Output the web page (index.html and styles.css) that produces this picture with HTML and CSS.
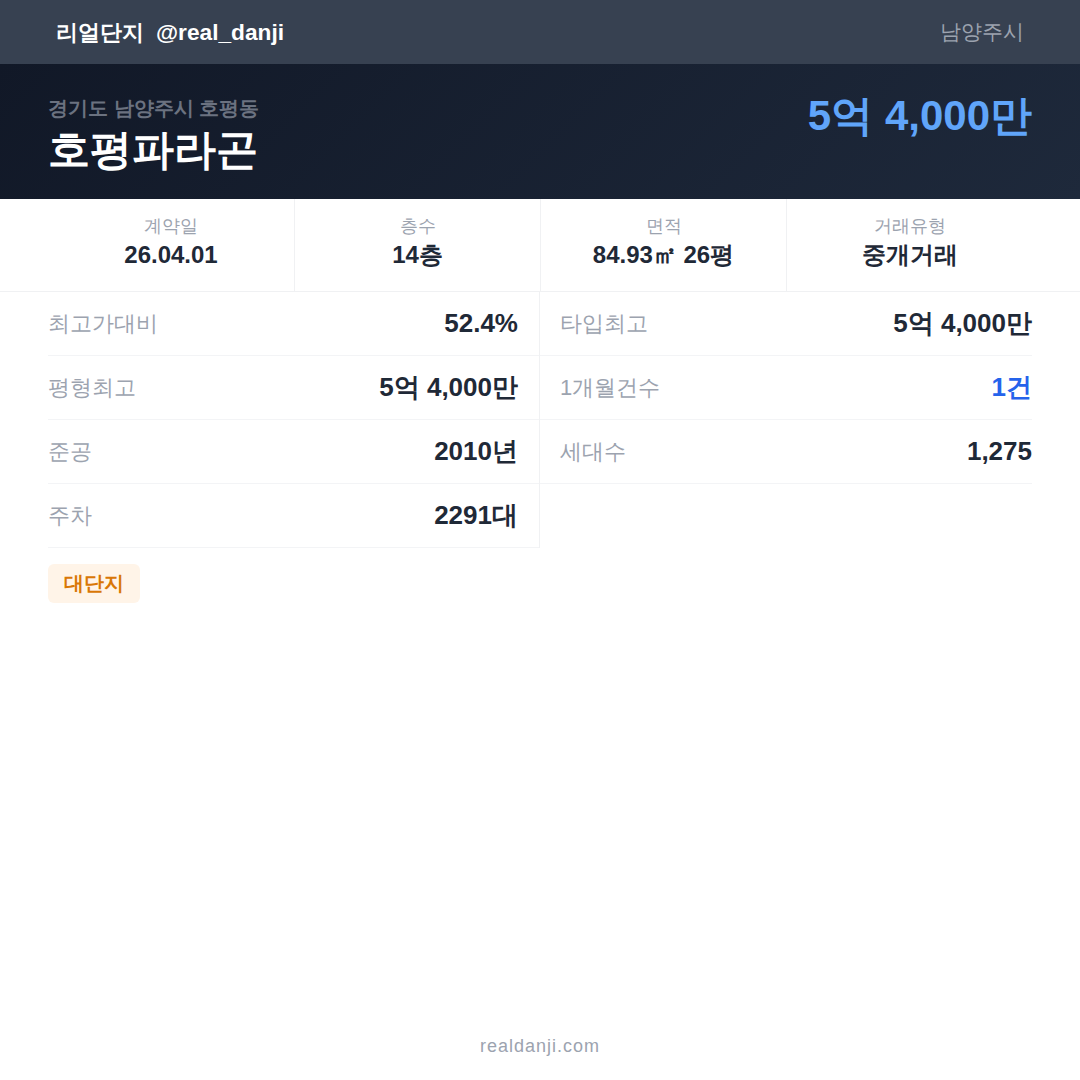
FILE: index.html
```html
<!DOCTYPE html>
<html lang="ko">
<head>
<meta charset="utf-8">
<link rel="stylesheet" href="styles.css">
</head>
<body>
<div class="page">
  <header class="topbar">
    <div class="brand"><span class="brand-name">리얼단지</span><span class="brand-handle">@real_danji</span></div>
    <div class="region">남양주시</div>
  </header>
  <section class="hero">
    <div class="hero-left">
      <div class="address">경기도 남양주시 호평동</div>
      <div class="title">호평파라곤</div>
    </div>
    <div class="price">5억 4,000만</div>
  </section>
  <section class="stats">
    <div class="stat"><div class="stat-label">계약일</div><div class="stat-value">26.04.01</div></div>
    <div class="stat"><div class="stat-label">층수</div><div class="stat-value">14층</div></div>
    <div class="stat"><div class="stat-label">면적</div><div class="stat-value">84.93㎡ 26평</div></div>
    <div class="stat"><div class="stat-label">거래유형</div><div class="stat-value">중개거래</div></div>
  </section>
  <section class="details">
    <div class="col col-left">
      <div class="row"><span class="label">최고가대비</span><span class="value">52.4%</span></div>
      <div class="row"><span class="label">평형최고</span><span class="value">5억 4,000만</span></div>
      <div class="row"><span class="label">준공</span><span class="value">2010년</span></div>
      <div class="row"><span class="label">주차</span><span class="value">2291대</span></div>
    </div>
    <div class="col col-right">
      <div class="row"><span class="label">타입최고</span><span class="value">5억 4,000만</span></div>
      <div class="row"><span class="label">1개월건수</span><span class="value blue">1건</span></div>
      <div class="row"><span class="label">세대수</span><span class="value">1,275</span></div>
    </div>
  </section>
  <div class="tags"><span class="tag">대단지</span></div>
  <footer class="footer">realdanji.com</footer>
</div>
</body>
</html>
```

FILE: styles.css
```css
* { box-sizing: border-box; }
html, body { margin: 0; padding: 0; background: #ffffff; }
body {
  font-family: "Liberation Sans", sans-serif;
  width: 1080px;
  height: 1080px;
  overflow: hidden;
}
.page {
  width: 1080px;
  height: 1080px;
  display: flex;
  flex-direction: column;
}
.topbar {
  height: 64px;
  background: #374151;
  display: flex;
  align-items: center;
  justify-content: space-between;
  padding: 0 56px;
}
.brand {
  display: flex;
  align-items: baseline;
  gap: 12px;
  color: #ffffff;
  font-weight: 700;
}
.brand-name { font-size: 22.4px; }
.brand-handle { font-size: 22.7px; }
.region {
  color: #9ca3af;
  font-size: 21px;
}
.hero {
  height: 135px;
  background: linear-gradient(135deg, #111827 0%, #1e293b 100%);
  display: flex;
  justify-content: space-between;
  align-items: flex-start;
  padding: 30px 48px 0 48px;
}
.address {
  color: #6b7280;
  font-size: 20px;
  font-weight: 700;
  line-height: 28px;
}
.title {
  color: #ffffff;
  font-size: 42px;
  font-weight: 700;
  line-height: 56px;
}
.price {
  color: #60a5fa;
  font-size: 42px;
  font-weight: 700;
  line-height: 48px;
  margin-top: -2px;
}
.stats {
  display: grid;
  grid-template-columns: repeat(4, 1fr);
  padding: 0 48px;
  border-bottom: 1px solid #f0f1f3;
  height: 93px;
}
.stat {
  display: flex;
  flex-direction: column;
  align-items: center;
  padding-top: 14px;
}
.stat + .stat { border-left: 1px solid #f0f1f3; }
.stat-label {
  color: #9ca3af;
  font-size: 18px;
  line-height: 26px;
}
.stat-value {
  color: #1f2937;
  font-size: 24px;
  font-weight: 700;
  line-height: 32px;
}
.details {
  display: grid;
  grid-template-columns: 1fr 1fr;
  padding: 0 48px;
  align-items: start;
}
.col-left { border-right: 1px solid #f0f1f3; }
.row {
  height: 64px;
  display: flex;
  align-items: center;
  justify-content: space-between;
  border-bottom: 1px solid #f3f4f6;
}
.col-left .row { padding-right: 21px; }
.col-right .row { padding-left: 20px; }
.label {
  color: #9ca3af;
  font-size: 22px;
}
.value {
  color: #1f2937;
  font-size: 26px;
  font-weight: 700;
}
.value.blue { color: #2563eb; }
.tags {
  padding: 16px 48px 0 48px;
  display: flex;
}
.tag {
  background: #fff4e8;
  color: #d97706;
  font-size: 20px;
  font-weight: 700;
  padding: 5px 16px;
  border-radius: 6px;
  line-height: 29px;
}
.footer {
  margin-top: auto;
  text-align: center;
  color: #9ca3af;
  font-size: 18px;
  letter-spacing: 1px;
  padding-bottom: 23px;
}
```
